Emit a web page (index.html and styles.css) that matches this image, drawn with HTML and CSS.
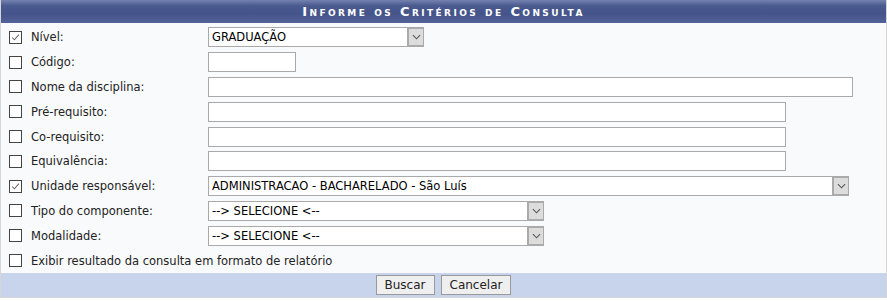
FILE: index.html
```html
<!DOCTYPE html>
<html lang="pt-BR">
<head>
    <meta charset="UTF-8">
    <title>Informe os Critérios de Consulta</title>
    <link rel="stylesheet" href="styles.css">
</head>
<body>
    <form class="formulario">
        <div class="caption">Informe os Critérios de Consulta</div>
        <div class="campos">
            <div class="linha">
                <span class="check marcado"><svg viewBox="0 0 13 13"><path d="M2.5 6.5 L5.2 9.2 L10.5 3.2" /></svg></span>
                <label>Nível:</label>
                <span class="select w-nivel"><span class="valor">GRADUAÇÃO</span><span class="seta"><svg viewBox="0 0 10 6"><path d="M1 1 L5 5 L9 1" /></svg></span></span>
            </div>
            <div class="linha">
                <span class="check"></span>
                <label>Código:</label>
                <span class="texto w-codigo"></span>
            </div>
            <div class="linha">
                <span class="check"></span>
                <label>Nome da disciplina:</label>
                <span class="texto w-nome"></span>
            </div>
            <div class="linha">
                <span class="check"></span>
                <label>Pré-requisito:</label>
                <span class="texto w-req"></span>
            </div>
            <div class="linha">
                <span class="check"></span>
                <label>Co-requisito:</label>
                <span class="texto w-req"></span>
            </div>
            <div class="linha">
                <span class="check"></span>
                <label>Equivalência:</label>
                <span class="texto w-req"></span>
            </div>
            <div class="linha">
                <span class="check marcado"><svg viewBox="0 0 13 13"><path d="M2.5 6.5 L5.2 9.2 L10.5 3.2" /></svg></span>
                <label>Unidade responsável:</label>
                <span class="select w-unidade"><span class="valor">ADMINISTRACAO - BACHARELADO - São Luís</span><span class="seta"><svg viewBox="0 0 10 6"><path d="M1 1 L5 5 L9 1" /></svg></span></span>
            </div>
            <div class="linha">
                <span class="check"></span>
                <label>Tipo do componente:</label>
                <span class="select w-tipo"><span class="valor">--&gt; SELECIONE &lt;--</span><span class="seta"><svg viewBox="0 0 10 6"><path d="M1 1 L5 5 L9 1" /></svg></span></span>
            </div>
            <div class="linha">
                <span class="check"></span>
                <label>Modalidade:</label>
                <span class="select w-tipo"><span class="valor">--&gt; SELECIONE &lt;--</span><span class="seta"><svg viewBox="0 0 10 6"><path d="M1 1 L5 5 L9 1" /></svg></span></span>
            </div>
            <div class="linha">
                <span class="check"></span>
                <label class="longo">Exibir resultado da consulta em formato de relatório</label>
            </div>
        </div>
        <div class="rodape">
            <button type="button">Buscar</button>
            <button type="button">Cancelar</button>
        </div>
    </form>
</body>
</html>
```

FILE: styles.css
```css
body {
    margin: 0;
    background: #fff;
    font-family: "DejaVu Sans", Verdana, sans-serif;
    font-size: 11.5px;
    color: #222;
}
.formulario {
    width: 885px;
    border: 1px solid #d6d6d6;
    border-top: none;
    background: #f9fafc;
}
.caption {
    height: 23px;
    line-height: 23px;
    text-align: center;
    color: #fff;
    font-weight: bold;
    font-size: 13px;
    font-variant: small-caps;
    letter-spacing: 2.4px;
    background: linear-gradient(#7482ae, #4a5a8f 25%, #44548a 60%, #53639a);
}
.campos {
    padding-top: 2px;
}
.linha {
    display: grid;
    grid-template-columns: 30px 177px 1fr;
    align-items: center;
    height: 24.8px;
}
.check {
    width: 11px;
    height: 11px;
    margin-left: 8px;
    border: 1px solid #444;
    background: #fff;
    display: flex;
}
.check svg {
    width: 11px;
    height: 11px;
    fill: none;
    stroke: #666;
    stroke-width: 1.2;
}
.linha label.longo {
    grid-column: 2 / 4;
}
.texto, .select {
    display: flex;
    height: 18px;
    border: 1px solid #a9a9a9;
    background: #fff;
    box-sizing: content-box;
}
.select {
    align-items: center;
}
.valor {
    flex: 1;
    padding-left: 3px;
    color: #000;
}
.seta {
    width: 14px;
    height: 16px;
    border: 2px solid #aaa;
    border-right-width: 1px;
    margin: -1px -1px -1px 0;
    background: #dcdcdc;
    display: flex;
    align-items: center;
    justify-content: center;
}
.seta svg {
    width: 9px;
    height: 6px;
    fill: none;
    stroke: #555;
    stroke-width: 1.2;
}
.w-nivel { width: 214px; }
.w-codigo { width: 86px; }
.w-nome { width: 643px; }
.w-req { width: 576px; }
.w-unidade { width: 639px; }
.w-tipo { width: 334px; }
.rodape {
    height: 24px;
    background: #c8d4eb;
    display: flex;
    justify-content: center;
    align-items: center;
    gap: 6px;
}
.rodape button {
    height: 20px;
    padding: 0 8px;
    font-family: "DejaVu Sans", Verdana, sans-serif;
    font-size: 12px;
    color: #222;
    background: #efefef;
    border: 1px solid #999;
    border-radius: 0;
}
```
